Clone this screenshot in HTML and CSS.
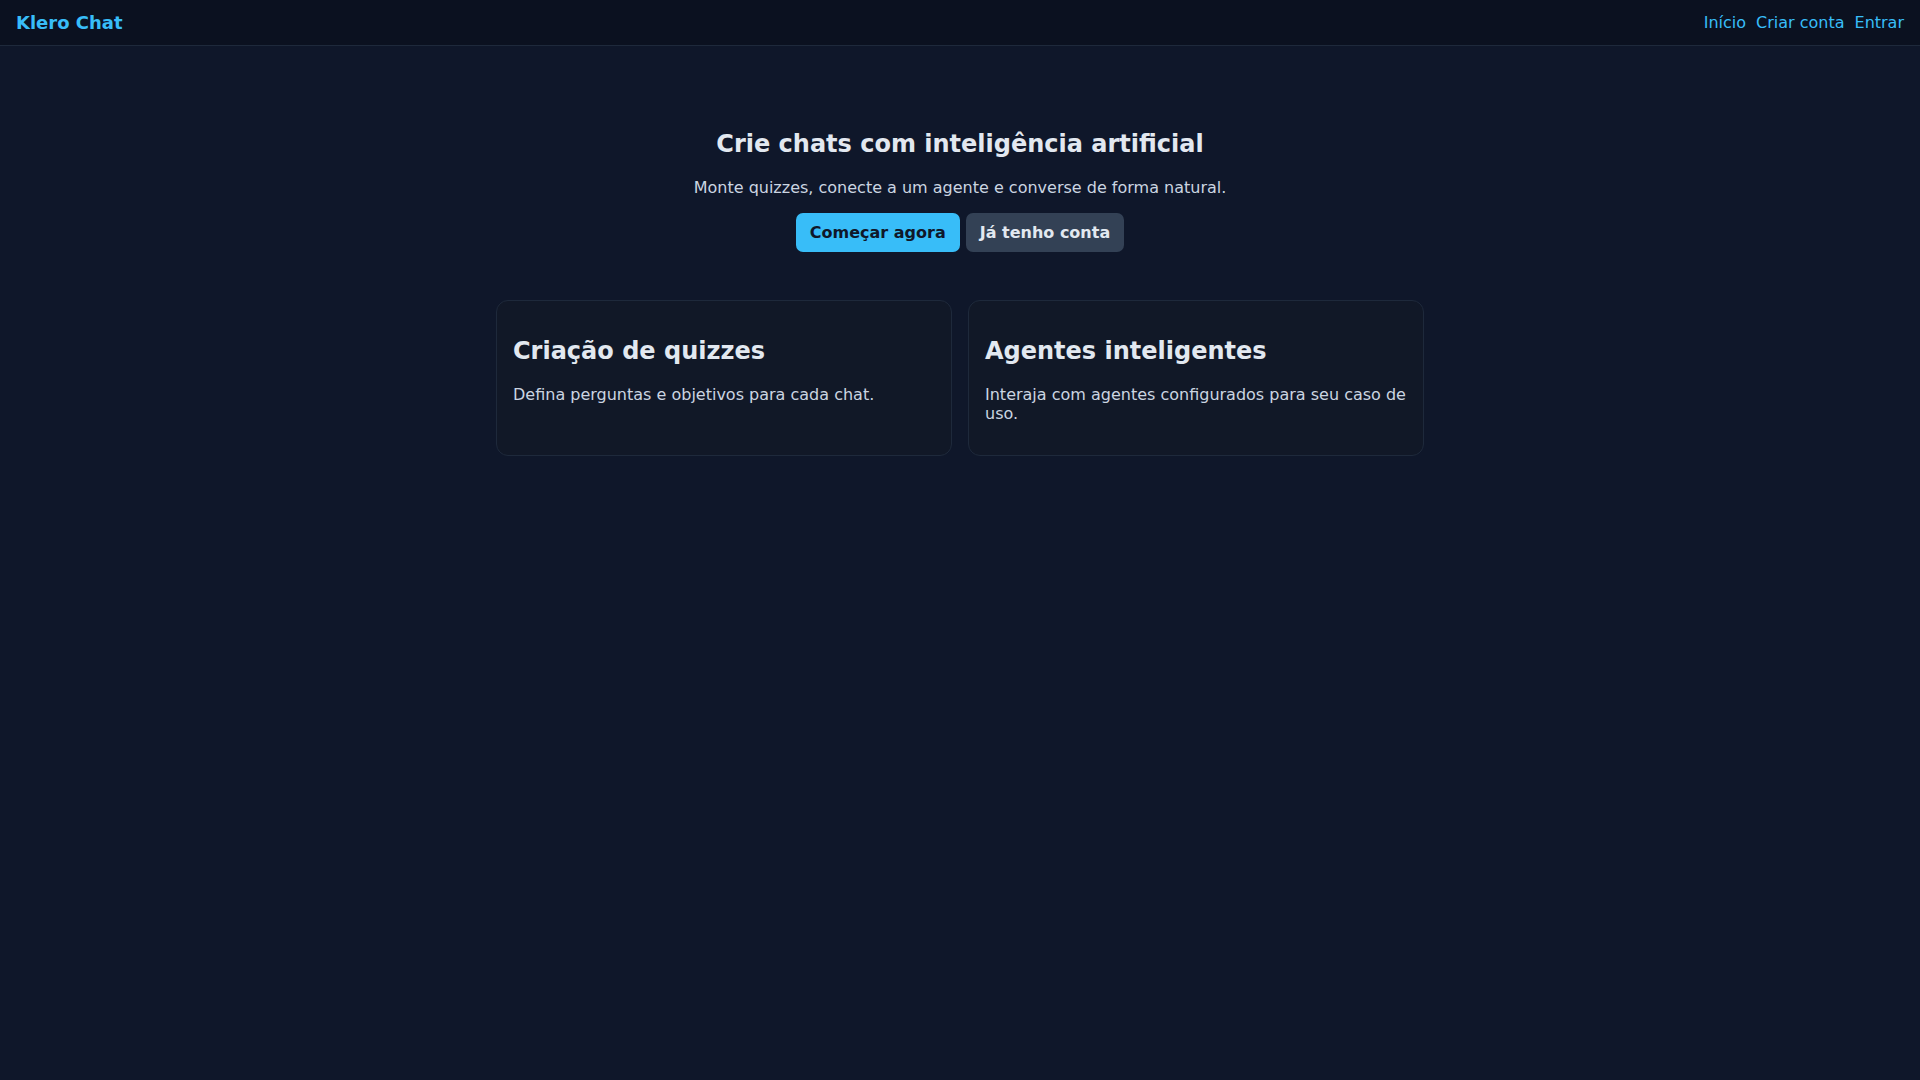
FILE: index.html
```html
<!DOCTYPE html>
<html lang="pt-BR">
<head>
<meta charset="UTF-8">
<title>Klero Chat</title>
<link rel="stylesheet" href="styles.css">
</head>
<body>
<div id="header">
  <a class="brand" href="#">Klero Chat</a>
  <div class="nav">
    <a href="#">Início</a>
    <a href="#">Criar conta</a>
    <a href="#">Entrar</a>
  </div>
</div>

<div id="main">
  <div class="hero">
    <h1>Crie chats com inteligência artificial</h1>
    <p>Monte quizzes, conecte a um agente e converse de forma natural.</p>
    <div class="actions">
      <a class="btn btn-primary" href="#">Começar agora</a>
      <a class="btn btn-secondary" href="#">Já tenho conta</a>
    </div>
  </div>

  <div class="features">
    <div class="card">
      <h2>Criação de quizzes</h2>
      <p>Defina perguntas e objetivos para cada chat.</p>
    </div>
    <div class="card">
      <h2>Agentes inteligentes</h2>
      <p>Interaja com agentes configurados para seu caso de uso.</p>
    </div>
  </div>
</div>
</body>
</html>
```

FILE: styles.css
```css
body {
  margin: 0;
  background: #0f172a;
  color: #e2e8f0;
  font-family: "DejaVu Sans", Verdana, sans-serif;
  font-size: 16px;
  min-height: 100vh;
}

a {
  color: #38bdf8;
  text-decoration: none;
}

#header {
  display: flex;
  align-items: center;
  justify-content: space-between;
  height: 45px;
  padding: 0 16px;
  background: #0b1120;
  border-bottom: 1px solid #1e293b;
}

.brand {
  font-size: 18px;
  font-weight: bold;
}

.nav {
  display: flex;
  gap: 10px;
}

#main {
  max-width: 928px;
  margin: 0 auto;
  padding: 0 16px;
}

.hero {
  text-align: center;
  padding: 84px 0 48px;
}

.hero h1 {
  font-size: 24px;
  margin: 0 0 20px;
  color: #e2e8f0;
}

.hero p {
  margin: 0 0 16px;
  color: #cbd5e1;
}

.actions {
  display: flex;
  justify-content: center;
  gap: 6px;
}

.btn {
  display: inline-block;
  padding: 10px 14px;
  border-radius: 7px;
  font-weight: bold;
}

.btn-primary {
  background: #38bdf8;
  color: #0f172a;
}

.btn-secondary {
  background: #334155;
  color: #e2e8f0;
}

.features {
  display: grid;
  grid-template-columns: 1fr 1fr;
  gap: 16px;
}

.card {
  background: #111827;
  border: 1px solid #1e293b;
  border-radius: 12px;
  padding: 0 16px;
}

.card h2 {
  font-size: 24px;
  margin: 36px 0 20px;
  color: #e2e8f0;
}

.card p {
  margin: 0 0 32px;
  color: #cbd5e1;
}
```
